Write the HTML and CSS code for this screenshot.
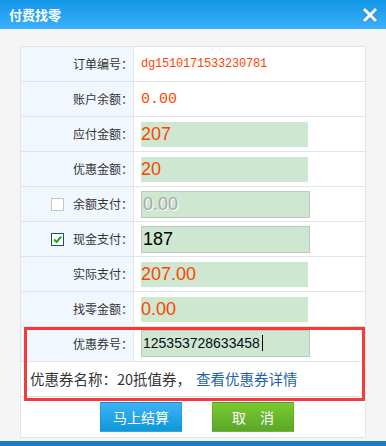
FILE: index.html
```html
<!DOCTYPE html>
<html lang="zh-CN">
<head>
<meta charset="utf-8">
<title>付费找零</title>
<link rel="stylesheet" href="styles.css">
</head>
<body>
<div class="dialog">
  <div class="titlebar">
    <span class="title">付费找零</span>
    <svg class="close" width="16" height="16" viewBox="0 0 16 16">
      <path d="M3 3 L13 13 M13 3 L3 13" stroke="#2a8fd6" stroke-width="4.6" stroke-linecap="square" fill="none"/>
      <path d="M3 3 L13 13 M13 3 L3 13" stroke="#ffffff" stroke-width="3" stroke-linecap="square" fill="none"/>
    </svg>
  </div>
  <div class="content">
    <div class="form">
      <div class="row">
        <div class="label">订单编号：</div>
        <div class="value"><span class="order-no">dg1510171533230781</span></div>
      </div>
      <div class="row">
        <div class="label">账户余额：</div>
        <div class="value"><span class="balance">0.00</span></div>
      </div>
      <div class="row">
        <div class="label">应付金额：</div>
        <div class="value"><div class="field red">207</div></div>
      </div>
      <div class="row">
        <div class="label">优惠金额：</div>
        <div class="value"><div class="field red">20</div></div>
      </div>
      <div class="row">
        <div class="label"><span class="check"></span>余额支付：</div>
        <div class="value"><div class="field boxed disabled">0.00</div></div>
      </div>
      <div class="row">
        <div class="label"><span class="check checked"><svg width="11" height="11" viewBox="0 0 11 11"><path d="M2 5.5 L4.6 8 L9.2 2.6" stroke="#2aa52a" stroke-width="2.2" fill="none"/></svg></span>现金支付：</div>
        <div class="value"><div class="field boxed dark">187</div></div>
      </div>
      <div class="row">
        <div class="label">实际支付：</div>
        <div class="value"><div class="field red">207.00</div></div>
      </div>
      <div class="row">
        <div class="label">找零金额：</div>
        <div class="value"><div class="field red">0.00</div></div>
      </div>
      <div class="row">
        <div class="label">优惠券号：</div>
        <div class="value"><div class="field boxed coupon">125353728633458<span class="caret"></span></div></div>
      </div>
      <div class="row full">
        <div class="coupon-name">优惠券名称：20抵值券，<a class="link" href="#">查看优惠券详情</a></div>
      </div>
      <div class="actions">
        <button class="btn btn-blue" type="button">马上结算</button>
        <button class="btn btn-green" type="button">取　消</button>
      </div>
    </div>
    <div class="highlight"></div>
  </div>
  <div class="strip"></div>
</div>
</body>
</html>
```

FILE: styles.css
```css
* { box-sizing: border-box; }
html, body { margin: 0; padding: 0; }
body {
  width: 386px;
  height: 446px;
  overflow: hidden;
  background: #f5f5f5;
  font-family: "Noto Sans CJK SC", "Liberation Sans", sans-serif;
  color: #333;
}
.dialog {
  position: relative;
  width: 386px;
  height: 446px;
  display: flex;
  flex-direction: column;
}
.titlebar {
  height: 29px;
  flex: none;
  background: linear-gradient(#1296e6, #3cb0fb);
  display: flex;
  align-items: center;
  justify-content: space-between;
  padding: 0 8px 0 9px;
}
.title {
  color: #fff;
  font-size: 13px;
  font-weight: bold;
  line-height: 14px;
}
.close { display: block; margin-top: 0px; }
.content {
  flex: 1;
  padding: 17px 20px 0 20px;
}
.form {
  width: 346px;
  border: 1px solid #e1e4e8;
  background: #fff;
}
.row {
  display: flex;
  height: 35px;
  border-bottom: 1px solid #e1e4e8;
}
.label {
  width: 113px;
  flex: none;
  background: #f0f7fe;
  border-right: 1px solid #e1e4e8;
  display: flex;
  align-items: center;
  justify-content: flex-end;
  font-size: 12px;
  line-height: 14px;
  color: #333;
}
.value {
  flex: 1;
  display: flex;
  align-items: center;
  padding-left: 7px;
}
.order-no {
  font-family: "Liberation Mono", monospace;
  font-size: 12px;
  color: #ff4400;
  letter-spacing: -0.2px;
}
.balance {
  font-family: "Liberation Mono", monospace;
  font-size: 15px;
  color: #ff4400;
}
.field {
  width: 167px;
  height: 25px;
  background: #cde7d0;
  font-family: "Liberation Sans", Arial, sans-serif;
  font-size: 18px;
  line-height: 25px;
  display: flex;
  align-items: center;
  white-space: nowrap;
}
.field.red { color: #ff4400; }
.field.boxed {
  width: 169px;
  height: 27px;
  border: 1px solid #c3c7c3;
  padding-left: 1px;
}
.field.disabled {
  color: #a8a8a8;
  text-shadow: 1px 1px 0 #fff;
}
.field.dark { color: #000; }
.field.coupon {
  font-size: 14px;
  color: #0a0a1e;
  margin-top: -2px;
}
.caret {
  display: inline-block;
  width: 1px;
  height: 16px;
  background: #000;
  margin-left: 2px;
}
.check {
  width: 13px;
  height: 13px;
  border: 1px solid #c8c6bc;
  background: #fff;
  margin-right: 9px;
  display: flex;
  align-items: center;
  justify-content: center;
}
.check.checked {
  border: 1.5px solid #1e4b7c;
}
.row.full {
  background: #fff;
  align-items: center;
  padding-left: 9px;
}
.coupon-name {
  font-size: 14.5px;
  line-height: 18px;
  color: #333;
}
.link {
  color: #1f5fb0;
  text-decoration: none;
  margin-left: 5px;
}
.actions {
  height: 40px;
  display: flex;
  align-items: center;
  justify-content: center;
  gap: 30px;
  padding-left: 8px;
}
.btn {
  width: 82px;
  height: 30px;
  border: 1px solid rgba(0,0,0,0.08);
  color: #fff;
  font-family: "Noto Sans CJK SC", sans-serif;
  font-size: 14px;
  line-height: 16px;
  padding: 0;
  cursor: pointer;
}
.btn-blue { background: linear-gradient(#3db3f6, #0e98d8); }
.btn-green { background: linear-gradient(#79cb30, #5ca52b); }
.highlight {
  position: absolute;
  left: 24px;
  top: 327px;
  width: 341px;
  height: 74px;
  border: 3px solid #f43a3a;
  pointer-events: none;
}
.strip {
  flex: none;
  height: 5px;
  background: #1b7cc4;
}
```
